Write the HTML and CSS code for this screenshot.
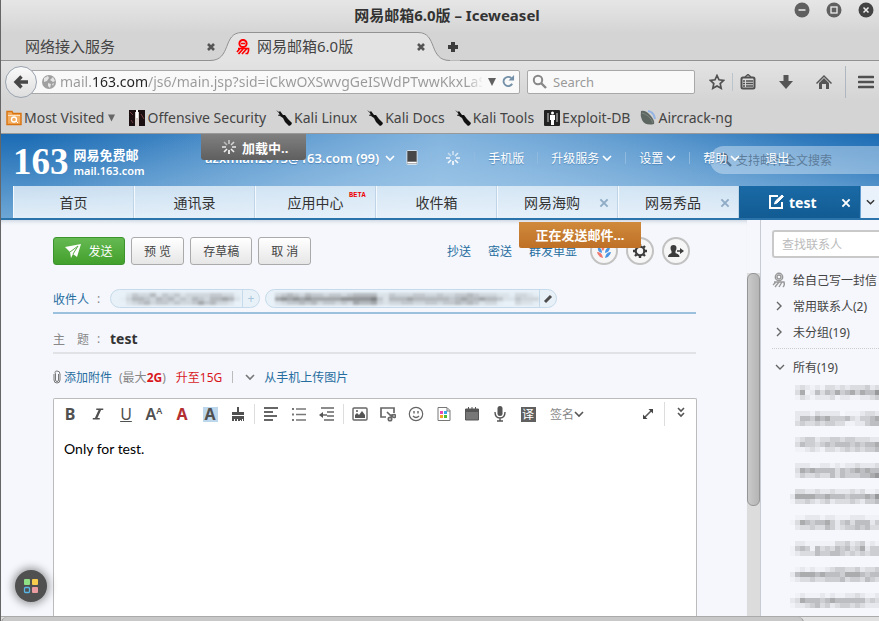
FILE: index.html
```html
<!DOCTYPE html>
<html lang="zh-CN">
<head>
<meta charset="utf-8">
<title>网易邮箱6.0版 - Iceweasel</title>
<link rel="stylesheet" href="styles.css">
</head>
<body>
<svg class="defs" aria-hidden="true">
  <symbol id="chev" viewBox="0 0 10 8"><path d="M1 2l4 4 4-4" fill="none" stroke="currentColor" stroke-width="1.6"/></symbol>
  <symbol id="close" viewBox="0 0 10 10"><path d="M2 2l6 6M8 2l-6 6" fill="none" stroke="currentColor" stroke-width="2.6"/></symbol>
  <symbol id="thinclose" viewBox="0 0 10 10"><path d="M2 2l6 6M8 2l-6 6" fill="none" stroke="currentColor" stroke-width="1.6"/></symbol>
  <symbol id="spin" viewBox="0 0 16 16"><g stroke="currentColor" stroke-width="1.6"><path d="M8 1v4" opacity=".6"/><path d="M13 3l-3 3" opacity=".7"/><path d="M15 8h-4" opacity=".8"/><path d="M13 13l-3-3" opacity=".9"/><path d="M8 15v-4"/><path d="M3 13l3-3" opacity=".9"/><path d="M1 8h4" opacity=".8"/><path d="M3 3l3 3" opacity=".5"/></g></symbol>
  <symbol id="kali" viewBox="0 0 16 16"><path d="M0 0l3 2 1-1 3 4 2 0 3 4 4 4-1 2-2 1-4-4-2-4-3-2-1-3z" fill="#111"/><path d="M3 4l-1 2 3 0z" fill="#333"/></symbol>
  <symbol id="mag" viewBox="0 0 16 16"><circle cx="6" cy="6" r="4.2" fill="none" stroke="currentColor" stroke-width="2"/><path d="M9 9l5 5" stroke="currentColor" stroke-width="2.4"/></symbol>
</svg>
<div class="window">
  <header class="titlebar">
    <h1>网易邮箱6.0版 – Iceweasel</h1>
    <div class="wm">
      <button aria-label="最小化"><svg viewBox="0 0 16 16"><circle cx="8" cy="8" r="7.5" fill="#606060"/><path d="M4.500 8h7" stroke="#eee" stroke-width="1.500"/></svg></button>
      <button aria-label="最大化"><svg viewBox="0 0 16 16"><circle cx="8" cy="8" r="7.5" fill="#606060"/><rect x="5" y="5" width="6" height="6" fill="none" stroke="#eee" stroke-width="1.300"/></svg></button>
      <button aria-label="关闭"><svg viewBox="0 0 16 16"><circle cx="8" cy="8" r="7.5" fill="#444"/><path d="M5.500 5.500l5 5M10.500 5.500l-5 5" stroke="#eee" stroke-width="1.500"/></svg></button>
    </div>
  </header>
  <nav class="tabs">
    <div class="btab"><span>网络接入服务</span><button aria-label="关闭标签"><svg viewBox="0 0 10 10"><use href="#close"/></svg></button></div>
    <div class="btab active">
      <svg class="tabshape" viewBox="0 0 244 29"><path d="M-6 28.500C16 28.500 6 .5 26 .5H202C222 .5 212 28.500 234 28.500H244V29H-6z" fill="#e3e3e3"/><path d="M-6 28.500C16 28.500 6 .5 26 .5H202C222 .5 212 28.500 234 28.500" fill="none" stroke="#929292"/></svg>
      <svg class="fav" viewBox="0 0 16 16" fill="none" stroke="#f00"><circle cx="8" cy="4.500" r="3.600" stroke-width="2"/><path d="M6 4.500h4" stroke-width="1.500"/><path d="M3 9.500h10.500q.5 3-1 5h-2M5 9.500L2 13M8 10l-4.500 5M11.500 10L7 15" stroke-width="1.700"/></svg>
      <span>网易邮箱6.0版</span><button aria-label="关闭标签"><svg viewBox="0 0 10 10"><use href="#close"/></svg></button></div>
    <button class="newtab" aria-label="新标签"><svg viewBox="0 0 10 10"><path d="M5 0v10M0 5h10" stroke="#3d3d3d" stroke-width="4"/></svg></button>
  </nav>
  <div class="nav">
    <button class="back" aria-label="后退"><svg viewBox="0 0 16 16"><path d="M8.500 2.500L3 8l5.500 5.500M4 8h11" fill="none" stroke="#474747" stroke-width="3.400"/></svg></button>
    <div class="url">
      <svg class="globe" viewBox="0 0 16 16"><circle cx="8" cy="8" r="7" fill="#a0a0a0"/><path d="M3 4l4-2 1 2-2 3-3 1zM9 6l3-3 2 4-2 1zM7 9l3 1-1 4-2-2zM11 10l2-1-1 3z" fill="#e4e4e4"/></svg>
      <input aria-label="地址" value="mail.163.com/js6/main.jsp?sid=iCkwOXSwvgGeISWdPTwwKkxLaSd">
      <svg class="drop" viewBox="0 0 8 8"><path d="M0 0h8L4 8z" fill="#606060"/></svg>
      <button aria-label="刷新"><svg viewBox="0 0 14 14"><path d="M11 9.500A5 5 0 1 1 10 3.200" fill="none" stroke="#7390a8" stroke-width="2"/><path d="M13 0v6H7z" fill="#7390a8"/></svg></button>
    </div>
    <label class="search"><svg viewBox="0 0 16 16"><use href="#mag"/></svg><input placeholder="Search" aria-label="Search"></label>
    <div class="tools">
      <button aria-label="收藏"><svg viewBox="0 0 16 16"><path d="M8 1.500l2 4.300 4.700.6-3.500 3.200 1 4.700L8 12l-4.200 2.300 1-4.700L1.300 6.400 6 5.800z" fill="none" stroke="#505050" stroke-width="1.700"/></svg></button><i></i>
      <button aria-label="书签"><svg viewBox="0 0 16 16" fill="none" stroke="#505050"><rect x="1.500" y="3.500" width="13" height="11" rx="1.500" stroke-width="2"/><path d="M5 3l3-2.500L11 3M3 7h2m1 0h7M3 9.500h2m1 0h7M3 12h2m1 0h7" stroke-width="1.400"/></svg></button>
      <button aria-label="下载"><svg viewBox="0 0 16 16"><path d="M5.500 1h5v6H15L8 15 1 7h4.500z" fill="#555"/></svg></button>
      <button aria-label="主页"><svg viewBox="0 0 16 16" fill="#555"><path d="M8 1L0 9l1 1 7-7 7 7 1-1z"/><path d="M3 9l5-5 5 5v6h-3v-5H6v5H3z"/></svg></button><b></b>
      <button aria-label="菜单"><svg viewBox="0 0 16 16"><path d="M1 3h14M1 8h14M1 13h14" stroke="#505050" stroke-width="2.600" stroke-linecap="round"/></svg></button>
    </div>
  </div>
  <nav class="bookmarks">
    <a href="#"><svg viewBox="0 0 16 16" fill="none" stroke="#d8730f"><path d="M1 14.500V1.500h5l1 2h8v11z" fill="#f3ae61" stroke-width="1.400"/><path d="M2 5.500h12" stroke="#fbe3c4"/><circle cx="8" cy="9.500" r="2.500" stroke="#fff" stroke-width="1.300"/><path d="M10 11l2 2" stroke="#fff"/></svg>Most Visited<svg class="tri" viewBox="0 0 8 8"><path d="M0 0h8L4 8z" fill="#666"/></svg></a>
    <a href="#"><svg viewBox="0 0 16 16"><path d="M0 0h16v16H0z" fill="#1d1012"/><path d="M6 2h4v14H6z" fill="#d6ccc8"/><path d="M7 0h2v8H7z" fill="#fff"/><path d="M1 2l3 3M12 4l3 5M2 10l2 3" stroke="#713c3c"/></svg>Offensive Security</a>
    <a href="#"><svg viewBox="0 0 16 16"><use href="#kali"/></svg>Kali Linux</a>
    <a href="#"><svg viewBox="0 0 16 16"><use href="#kali"/></svg>Kali Docs</a>
    <a href="#"><svg viewBox="0 0 16 16"><use href="#kali"/></svg>Kali Tools</a>
    <a href="#"><svg viewBox="0 0 16 16"><rect width="16" height="16" rx="1" fill="#222"/><path d="M3 3h2v9H3zM12 3h2v9h-2z" fill="#777"/><circle cx="8.500" cy="3" r="1.500" fill="#fff"/><path d="M6 5h5v5h-1v5H7v-5H6z" fill="#fff"/></svg>Exploit-DB</a>
    <a href="#"><svg viewBox="0 0 16 16"><path d="M1 1q5-1 10 5 4 5 3 8-9 2-12-4Q0 6 1 1z" fill="#5d6661"/><path d="M2 3q8 2 11 10" stroke="#7d8883" fill="none"/><path d="M8 1q6 1 7 8" stroke="#94b4e4" stroke-width="2" fill="none"/></svg>Aircrack-ng</a>
  </nav>
  <div class="page">
    <header class="mailhead">
      <a class="logo" href="#"><strong>163</strong><span>网易免费邮<small>mail.163.com</small></span></a>
      <nav class="account">
        <a class="me" href="#">azxmian2013@163.com (99)<svg class="chev" viewBox="0 0 10 8"><use href="#chev"/></svg></a>
        <svg class="phone" viewBox="0 0 12 16"><rect x=".5" y=".5" width="11" height="15" rx="1" fill="#474747" stroke="#dceaf6"/><path d="M1 13.500h10" stroke="#fff" stroke-width="2"/></svg><i></i>
        <svg class="busy" viewBox="0 0 16 16"><use href="#spin"/></svg><i></i>
        <a href="#">手机版</a><i></i>
        <a href="#">升级服务<svg class="chev" viewBox="0 0 10 8"><use href="#chev"/></svg></a><i></i>
        <a href="#">设置<svg class="chev" viewBox="0 0 10 8"><use href="#chev"/></svg></a><i></i>
        <a href="#">帮助<svg class="chev" viewBox="0 0 10 8"><use href="#chev"/></svg></a><i></i>
        <a href="#">退出</a>
      </nav>
      <label class="fulltext"><svg viewBox="0 0 16 16"><use href="#mag"/></svg><input placeholder="支持邮件全文搜索" aria-label="支持邮件全文搜索"></label>
      <div class="loading"><svg viewBox="0 0 16 16"><use href="#spin"/></svg>加载中..</div>
    </header>
    <nav class="mailtabs">
      <a href="#">首页</a>
      <a href="#">通讯录</a>
      <a href="#">应用中心<sup>BETA</sup></a>
      <a href="#">收件箱</a>
      <a href="#" class="closable">网易海购<svg viewBox="0 0 10 10"><use href="#thinclose"/></svg></a>
      <a href="#" class="closable">网易秀品<svg viewBox="0 0 10 10"><use href="#thinclose"/></svg></a>
      <a href="#" class="closable current"><svg class="pen" viewBox="0 0 16 16" fill="none" stroke="#fff" stroke-width="2"><path d="M10 2H2v12h12V8"/><path d="M6.500 10l1-3L14 1l1.500 1.500L9 9z" fill="#fff" stroke-width="1"/></svg>test<svg viewBox="0 0 10 10"><use href="#thinclose"/></svg></a>
      <button aria-label="更多标签"><svg viewBox="0 0 10 8"><use href="#chev"/></svg></button>
    </nav>
    <div class="workspace">
      <main class="compose">
        <div class="actions">
          <button class="send"><svg viewBox="0 0 16 14"><path d="M0 3L16 0 12 13 8 10 6 14 5 8z" fill="#fff"/><path d="M5 8l8-6-5 8" stroke="#59ab46" fill="none"/></svg>发送</button>
          <button>预 览</button><button>存草稿</button><button>取 消</button>
          <div class="links"><a href="#">抄送</a><a href="#">密送</a><a href="#">群发单显</a></div>
          <div class="round">
            <button aria-label="主题"><svg viewBox="0 0 16 16"><path d="M7 15Q2 14 1 9q5 0 6 6zM7 8Q4 5 7 1q3 3 0 7z" fill="#f0786e"/><path d="M9 15q5-1 6-6-5 0-6 6zM9 10q0-5 5-6 0 5-5 6zM6 10Q1 9 2 4q4 1 4 6z" fill="#4b96e4"/></svg></button>
            <button aria-label="设置"><svg viewBox="0 0 16 16" fill="none" stroke="#3c3c3c"><circle cx="8" cy="8" r="4.300" stroke-width="2.200"/><path d="M8 1v2M8 13v2M1 8h2M13 8h2M3 3l1.500 1.500M11.500 11.500L13 13M3 13l1.500-1.500M11.500 4.500L13 3" stroke-width="2.400"/></svg></button>
            <button aria-label="添加联系人"><svg viewBox="0 0 16 16" fill="#3c3c3c"><path d="M5.500 2q3 0 3 3 0 2-1 3v2q4 1 4 4H0q0-3 3.500-4V8q-1-1-1-3 0-3 3-3z"/><path d="M9 7.200h3V5l4 3-4 3V8.800H9z"/></svg></button>
          </div>
          <div class="sending">正在发送邮件...</div>
        </div>
        <div class="field to"><a href="#">收件人</a><span>:</span>
          <div class="chip first"><svg data-rows="02433524342333344331|13554354534354355652|02345344343346453320" data-cell="6"></svg><button aria-label="添加">+</button></div>
          <div class="chip second"><svg data-rows="34543544344345555224333443343344543332213321|67676766666777778425556555555456556554224333|23445453443436556323344334434454542331003221" data-cell="6"></svg><button aria-label="编辑"><svg viewBox="0 0 10 10"><path d="M2 8l6-6" stroke="#4d4d4d" stroke-width="3"/></svg></button></div>
        </div>
        <div class="field subject"><label for="subject">主　题</label><span>:</span><input id="subject" value="test"></div>
        <div class="attach">
          <svg class="clip" viewBox="0 0 8 14"><path d="M1 4v6q0 3 3 3t3-3V4q0-3-3-3T2.500 4v6q0 1.500 1.500 1.500T5.500 10V4" fill="none" stroke="#777"/></svg>
          <a href="#">添加附件</a><span class="max">(最大<b>2G</b>)</span><a class="up" href="#">升至15G</a><i></i>
          <svg class="chev" viewBox="0 0 10 8"><use href="#chev"/></svg><a href="#">从手机上传图片</a>
        </div>
        <section class="editor">
          <div class="format">
            <button class="t b">B</button><button class="t i" aria-label="斜体"><svg viewBox="0 0 16 16"><path d="M6 2.500h8M2 13.500h8" stroke="#505050" stroke-width="1.600"/><path d="M10.500 2.500l-5 11" stroke="#505050" stroke-width="2.600"/></svg></button><button class="t u">U</button><button class="t aa">A<small>A</small></button><button class="t red">A</button><button class="t hl"><span>A</span></button>
            <button aria-label="格式刷"><svg viewBox="0 0 16 16" fill="#505050"><path d="M7 1h2v5h5v3H2V6h5z"/><path d="M2 10h12v5h-1v-2h-1v2h-1v-1h-1v1H8v-2H7v2H5v-2H4v2H2z"/></svg></button><i></i>
            <button aria-label="对齐"><svg viewBox="0 0 16 16"><path d="M1 2h14M1 6h9M1 10h13M1 14h9" stroke="#666" stroke-width="1.800"/></svg></button>
            <button aria-label="列表"><svg viewBox="0 0 16 16"><path d="M5 3h10M5 8.500h10M5 14h10" stroke="#777" stroke-width="1.600"/><path d="M1 3h2M1 8.500h2M1 14h2" stroke="#777" stroke-width="2"/></svg></button>
            <button aria-label="缩进"><svg viewBox="0 0 16 16"><path d="M2 2h13M8 6h7M8 10h7M5 14h10M3 9h5" stroke="#666" stroke-width="1.700"/><path d="M0 9l4-3v6z" fill="#555"/></svg></button><i></i>
            <button aria-label="图片"><svg viewBox="0 0 16 16"><rect x="1" y="2" width="14" height="12" rx="1" fill="none" stroke="#666" stroke-width="1.400"/><path d="M3 12V9l2-2 2 2 3-4 3 4v3z" fill="#555"/><circle cx="5" cy="5" r="1" fill="#555"/></svg></button>
            <button aria-label="截图"><svg viewBox="0 0 16 16" fill="none" stroke="#666" stroke-width="1.700"><path d="M6 11H1V2h13v5"/><path d="M7 6l5 5M13 9h-3"/><circle cx="10" cy="13" r="1.700"/><circle cx="14" cy="10" r="1.500"/></svg></button>
            <button aria-label="表情"><svg viewBox="0 0 16 16"><circle cx="8" cy="8" r="6.700" fill="none" stroke="#666" stroke-width="1.200"/><path d="M6 5v2.500M10 5v2.500M5 10q3 3 6 0" fill="none" stroke="#666" stroke-width="1.400"/></svg></button>
            <button aria-label="信纸"><svg viewBox="0 0 16 16"><path d="M2 1.500h9l3 3v10H2zM11 2v3h3" fill="#fff" stroke="#777"/><path d="M4 5h3v3H4z" fill="#e749b0"/><path d="M8 5h3v3H8z" fill="#36a5ed"/><path d="M4 9h3v3H4z" fill="#f3a425"/><path d="M8 9h3v3H8z" fill="#51bc2f"/></svg></button>
            <button aria-label="日历"><svg viewBox="0 0 16 16"><path d="M1.500 3h13v11h-13z" fill="#777" stroke="#555"/><path d="M1 3h14v3H1zM4 1h1v3H4zM7.500 1h1v3h-1zM11 1h1v3h-1z" fill="#555"/></svg></button>
            <button aria-label="录音"><svg viewBox="0 0 16 16"><rect x="5.500" y="0" width="5" height="10" rx="2.500" fill="#555"/><path d="M3 6q0 6 5 6t5-6M8 12v3M5 15h6" fill="none" stroke="#555" stroke-width="1.400"/></svg></button>
            <button class="tr"><span>译</span></button>
            <button class="sign">签名<svg viewBox="0 0 10 8"><use href="#chev"/></svg></button>
            <button class="expand" aria-label="全屏"><svg viewBox="0 0 16 16"><path d="M4 12L12 4" stroke="#555" stroke-width="1.600"/><path d="M8.500 3H13v4.500zM3 8.500V13h4.500z" fill="#444"/></svg></button><i class="tall"></i>
            <button class="more" aria-label="更多"><svg viewBox="0 0 16 16"><path d="M5 2l3 3 3-3M5 7l3 3 3-3" fill="none" stroke="#555" stroke-width="1.600"/></svg></button>
          </div>
          <textarea aria-label="正文">Only for test.</textarea>
        </section>
      </main>
      <div class="vscroll"><div></div></div>
      <aside class="contacts">
        <input placeholder="查找联系人" aria-label="查找联系人">
        <ul>
          <li><svg viewBox="0 0 14 16" fill="none" stroke="#999" stroke-width="1.400"><circle cx="7" cy="5" r="3.700"/><circle cx="7" cy="5" r="2"/><path d="M2 10h10q1 3-1 5M4 10l-3 3M7 10l-4 5M10 10l-3 5"/></svg>给自己写一封信</li>
          <li><svg viewBox="0 0 14 16"><path d="M5 4l4 4-4 4" fill="none" stroke="#666" stroke-width="1.400"/></svg>常用联系人(2)</li>
          <li><svg viewBox="0 0 14 16"><path d="M5 4l4 4-4 4" fill="none" stroke="#666" stroke-width="1.400"/></svg>未分组(19)</li>
        </ul>
        <ul class="all">
          <li><svg viewBox="0 0 14 16"><path d="M4 6l4 4 4-4" fill="none" stroke="#666" stroke-width="1.400"/></svg>所有(19)</li>
        </ul>
        <div class="people">
          <svg data-cell="5" data-rows="023212133232333423|036125354645646557|013212223122112234"></svg>
          <svg data-cell="5" data-rows="022213222201112332|025546564445324456|034334344331122455"></svg>
          <svg data-cell="5" data-rows="023442334434433322|035443454555454556|011232133234343445"></svg>
          <svg data-cell="5" data-rows="022211221212232223|036565555354565655|024334335354445567"></svg>
          <svg data-cell="5" data-rows="033223223222323112|266665565554555657|133432342333432445"></svg>
          <svg data-cell="5" data-rows="011222122111222111|136545564245355524|023343354234454533"></svg>
          <svg data-cell="5" data-rows="022111111334234121|145415343545346244|123335445543434344"></svg>
          <svg data-cell="5" data-rows="012121123443342334|256665655546665455|123343344453443543"></svg>
          <svg data-cell="5" data-rows="012111212112232112|236555456555555343|122345342344343222"></svg>
        </div>
      </aside>
      <button class="apps" aria-label="应用"><svg viewBox="0 0 16 16"><rect x="1" y="1" width="6" height="6" rx="1" fill="#8fe085"/><rect x="9" y="1" width="6" height="6" rx="1" fill="#f8cc4d"/><rect x="1.500" y="9.500" width="5" height="5" rx="1" fill="none" stroke="#58b6e6" stroke-width="1.300"/><rect x="9" y="9" width="6" height="6" rx="1" fill="#eb9ca0"/></svg></button>
    </div>
  </div>
  <div class="hscroll"><div></div></div>
</div>
<script src="mosaic.js"></script>
</body>
</html>
```
FILE: styles.css
```css
* { box-sizing: border-box; }
body { margin: 0; font-family: "Noto Sans", "Noto Sans CJK SC", sans-serif; font-size: 13px; color: #444; }
button, input, textarea { font: inherit; color: inherit; margin: 0; padding: 0; border: 0; background: none; outline: 0; }
button { display: flex; align-items: center; justify-content: center; flex: none; white-space: nowrap; }
a { color: inherit; text-decoration: none; white-space: nowrap; }
svg { display: block; flex: none; width: 16px; height: 16px; }
.defs { display: none; }
.window { display: flex; flex-direction: column; height: 100vh; overflow: hidden; border-left: 1px solid #666; background: #d4d4d4; }

.titlebar { position: relative; height: 32px; flex: none; display: flex; justify-content: center; background: linear-gradient(#e6e6e6, #d5d5d5); }
.titlebar h1 { margin: 0; padding-left: 14px; font-size: 15px; line-height: 30px; color: #333; }
.wm { position: absolute; right: 5px; top: 2px; display: flex; gap: 16px; }
.tabs { display: flex; height: 29px; flex: none; box-shadow: inset 0 -1px #929292; }
.btab { display: flex; align-items: center; font-size: 15px; width: 215px; padding: 0 0 0 24px; line-height: 29px; position: relative; }
.btab span { flex: 1; position: relative; }
.btab button { position: relative; color: #555; }
.btab button svg { width: 10px; height: 10px; }
.btab.active { width: 210px; padding: 0 0 0 19px; }
.tabshape { position: absolute; left: 0; top: 0; width: 244px; height: 29px; overflow: visible; }
.fav { position: relative; margin-right: 6px; }
.newtab { position: relative; width: 54px; }
.newtab svg { width: 10px; height: 10px; }

.nav { display: flex; align-items: center; height: 41px; flex: none; padding-left: 4px; background: linear-gradient(#e3e3e3, #d4d4d4); }
.back { width: 32px; height: 32px; border-radius: 50%; border: 1px solid #9aa4b0; background: linear-gradient(#fafafa, #dedede); position: relative; }
.url, .search { display: flex; align-items: center; height: 24px; border: 1px solid #a8a8a8; border-radius: 2px; background: #f9f9f9; }
.url { flex: 1; margin-left: -7px; padding: 0 4px 0 10px; gap: 3px; }
.url input { flex: 1; min-width: 0; font-size: 14px; color: transparent; background: linear-gradient(90deg, #999 31px, #222 31px, #222 88px, #999 88px, #999 406px, #f9f9f9 424px); -webkit-background-clip: text; background-clip: text; }
.url .drop { width: 8px; height: 8px; margin: 0 3px; }
.url button svg { width: 13px; height: 13px; }
.search { width: 168px; margin-left: 7px; padding-left: 4px; gap: 5px; color: #888; }
.search input { width: 120px; }
.search input::placeholder { color: #999; opacity: 1; }
.tools { display: flex; align-items: center; width: 184px; padding-left: 14px; }
.tools i { width: 1px; height: 18px; margin: 0 7px; background: #bbc3cb; }
.tools b { width: 1px; height: 32px; margin: 0 12px 0 13px; background: #aeb6c0; }
.tools button + button { margin-left: 22px; }
.bookmarks { display: flex; align-items: center; height: 32px; flex: none; padding-left: 5px; gap: 10px; border-bottom: 1px solid #999; background: #d4d4d4; font-size: 14px; }
.bookmarks a { display: flex; align-items: center; gap: 2px; }
.bookmarks .tri { width: 7px; height: 8px; margin: 0 4px 0 2px; }

.page { flex: 1; min-height: 0; display: flex; flex-direction: column; background: radial-gradient(ellipse 440px 140px at 54% 100px, rgba(190,217,240,.55), transparent) 0 0 / 100% 84px no-repeat, linear-gradient(90deg, transparent 3%, rgba(150,195,232,.75) 50%, transparent) 0 0 / 100% 84px no-repeat, linear-gradient(#1b6bb4, #70a8d6 86px) #f5f7fc; }
.mailhead { position: relative; height: 52px; flex: none; display: flex; color: #fff; font-size: 12px; }
.logo { display: flex; width: 204px; padding: 12px 0 0 12px; gap: 5px; }
.logo strong { font-family: "Liberation Serif", serif; font-size: 37px; line-height: 32px; font-weight: 700; }
.logo span { font-size: 13px; font-weight: 600; line-height: 18px; }
.logo small { display: block; font-size: 11px; line-height: 14px; }
.account { position: relative; z-index: 1; display: flex; align-items: center; height: 47px; text-shadow: 0 1px 1px rgba(20,80,140,.4); }
.account a { display: flex; align-items: center; }
.account .me { font-size: 13px; font-weight: 600; }
.account i { width: 1px; height: 12px; margin: 0 13px; background: #8fb9df; }
.account i:last-of-type { margin: 0 12px; }
.chev { width: 10px; height: 8px; margin-left: 3px; }
.account .me .chev { margin-left: 6px; }
.phone { width: 12px; height: 15px; margin-left: 11px; }
.fulltext { position: absolute; right: 0; top: 12px; width: 169px; height: 28px; display: flex; align-items: center; gap: 3px; padding-left: 7px; border-radius: 14px 0 0 14px; background: rgba(220,236,249,.45); color: #4f6f8e; }
.fulltext input { width: 130px; }
.fulltext input::placeholder { color: #5d7c9a; opacity: 1; }
.loading { position: absolute; z-index: 2; left: 200px; top: 0; width: 105px; height: 26px; display: flex; align-items: center; gap: 5px; padding-left: 20px; border-radius: 0 0 3px 3px; background: linear-gradient(#808080, #5f5f5f); font-size: 13px; font-weight: 700; }
.mailtabs { display: flex; height: 34px; flex: none; padding-left: 12px; border-bottom: 2px solid #2a73ab; font-size: 14px; color: #333; }
.mailtabs a { position: relative; flex: 0 0 121px; display: flex; align-items: center; justify-content: center; border-left: 1px solid #f4f9fd; border-right: 1px solid #bfd4e6; background: linear-gradient(rgba(226,238,248,.82), rgba(236,244,251,.92)); }
.mailtabs sup { position: absolute; left: 93px; top: 5px; font-size: 7px; line-height: 9px; font-family: "Liberation Mono", monospace; font-weight: 700; color: #e00; }
.mailtabs .closable { justify-content: flex-start; padding-left: 26px; }
.mailtabs .closable > svg:last-child { position: absolute; right: 7px; top: 11px; width: 12px; height: 12px; color: #8fabc6; }
.mailtabs a.current { gap: 5px; padding-left: 28px; border-color: #176199; background: linear-gradient(#1a6aa6, #125b93); color: #fff; font-weight: 700; }
.mailtabs .current > svg:last-child { color: #fff; }
.mailtabs button { flex: 1; margin-left: 1px; background: #e9f2fa; }
.mailtabs button svg { width: 9px; height: 8px; }

.workspace { position: relative; flex: 1; min-height: 0; display: flex; background: #f5f7fc; }
.compose { flex: 1; min-width: 0; display: flex; flex-direction: column; padding: 17px 50px 0 52px; box-shadow: inset 0 4px 4px -3px #c4ccd8; font-size: 12px; }
.actions { position: relative; display: flex; align-items: center; gap: 6px; height: 28px; flex: none; }
.actions > button { height: 28px; padding: 0 12px; border: 1px solid #aaa; border-radius: 3px; background: linear-gradient(#fff, #e6e6e6); }
.actions > .send { width: 72px; padding: 0; gap: 7px; color: #fff; border-color: #3c942e; background: linear-gradient(#65b952, #43a02c); }
.links { display: flex; gap: 17px; margin-left: auto; color: #256d9f; }
.round { display: flex; gap: 8px; margin: 0 7px 0 7px; }
.round button { width: 28px; height: 28px; border: 2px solid #c2c2c2; border-radius: 50%; background: #f6f6f6; }
.sending { position: absolute; right: 56px; top: -15px; width: 122px; height: 26px; line-height: 26px; text-align: center; color: #fff; font-size: 13px; font-weight: 700; border-radius: 0 0 2px 2px; background: linear-gradient(#d08a3c, #be7026); }
.field { display: flex; align-items: center; flex: none; color: #888; margin-right: 1px; }
.field > span { width: 13px; margin-left: 8px; }
.to { height: 33px; margin-top: 16px; border-bottom: 2px solid #9cc1de; padding-top: 4px; }
.to a { color: #256d9f; }
.chip { display: flex; align-items: center; justify-content: space-between; height: 19px; margin-right: 5px; padding-left: 9px; border: 1px solid #c5daea; border-radius: 10px; background: #e8f1f8; overflow: hidden; }
.chip.first { width: 150px; }
.chip.second { width: 292px; }
.chip > svg { height: 12px; filter: blur(1px); }
.chip button { width: 17px; height: 17px; border-left: 1px solid #c5daea; color: #a9c6dc; }
.chip button svg { width: 10px; height: 10px; }
.subject { height: 40px; border-bottom: 2px solid #e0e2e5; padding-top: 11px; }
.subject input { flex: 1; min-width: 0; font-size: 14px; line-height: 20px; font-weight: 700; color: #333; }
.attach { display: flex; align-items: center; height: 44px; padding-top: 2px; flex: none; color: #256d9f; }
.attach .clip { width: 8px; height: 14px; margin-right: 3px; }
.attach .max { margin: 0 10px 0 7px; color: #888; }
.attach b, .attach .up { color: #d9171b; }
.attach i { width: 1px; height: 12px; margin: 0 12px 0 10px; background: #bbb; }
.attach .chev { margin: 0 9px 0 0; color: #777; }
.editor { flex: 1; min-height: 0; display: flex; flex-direction: column; border: 1px solid #bbb; border-bottom: 0; border-radius: 2px 2px 0 0; background: #fff; }
.format { display: flex; align-items: center; height: 30px; flex: none; padding-left: 2px; }
.format button { width: 28px; height: 28px; }
.format i { width: 1px; height: 20px; margin: 0 2px; background: #ddd; }
.format .t { font-size: 16px; font-weight: 700; color: #505050; }
.format .i svg { width: 14px; height: 14px; }
.format .u { font-weight: 400; text-decoration: underline; }
.format .aa { align-items: flex-start; font-weight: 600; line-height: 28px; }
.format .aa small { font-size: 9px; line-height: 22px; }
.format .t.red { color: #b32f31; }
.format .hl span { width: 15px; line-height: 15px; background: #bcd7ec; }
.format .tr span { width: 15px; line-height: 15px; font-size: 12px; background: #606060; color: #fff; }
.format button.sign { width: 50px; color: #888; }
.format .sign svg { width: 10px; height: 8px; color: #555; }
.format .expand { margin-left: auto; }
.format .tall { height: 24px; }
.format .more { margin-right: 1px; }
.editor textarea { flex: 1; resize: none; overflow: hidden; padding: 10px; font-family: Lato, "Noto Sans CJK SC", sans-serif; font-size: 14px; line-height: 20px; color: #000; }
.vscroll { width: 13px; flex: none; margin-top: 53px; background: #dcdcdc; }
.vscroll div { height: 68%; border: 1px solid #959595; border-radius: 6px; background: linear-gradient(90deg, #c9c9c9, #b5b5b5); }
.contacts { width: 119px; flex: none; padding: 10px 0 0 11px; border-left: 1px solid #c8ccd2; font-size: 12px; overflow: hidden; }
.contacts input { display: block; width: 120px; height: 28px; padding-left: 8px; border: 2px solid #c9c9c9; border-radius: 3px; background: #fff; }
.contacts input::placeholder { color: #bbb; opacity: 1; }
.contacts ul { list-style: none; margin: 0; padding: 9px 0 3px; border-bottom: 1px dotted #ccc; }
.contacts li { display: flex; align-items: center; gap: 7px; height: 26px; white-space: nowrap; }
.contacts li svg { width: 14px; height: 16px; }
.contacts .all { padding: 5px 0 3px; border: 0; }
.people { display: flex; flex-direction: column; gap: 11px; margin: 2px 0 0 18px; }
.apps { position: absolute; left: 14px; bottom: 14px; width: 32px; height: 32px; border-radius: 50%; background: #505050; box-shadow: 0 0 8px 2px rgba(0,0,0,.4); }
.hscroll { height: 5px; flex: none; overflow: hidden; background: #e0e0e0; border-top: 1px solid #aaa; }
.hscroll div { width: 803px; max-width: 92%; height: 12px; border: 1px solid #909090; border-top: 0; border-radius: 6px; background: #c8c8c8; }
```
FILE: mosaic.js
```js
// Draws the pixelated addresses: each digit is the darkness of one cell.
document.querySelectorAll('svg[data-rows]').forEach(function (svg) {
  var rows = svg.dataset.rows.split('|');
  var w = Number(svg.dataset.cell);
  var h = w === 6 ? 4 : 5;
  svg.setAttribute('viewBox', '0 0 ' + rows[0].length * w + ' ' + rows.length * h);
  svg.style.width = rows[0].length * w + 'px';
  svg.style.height = rows.length * h + 'px';
  rows.forEach(function (row, y) {
    row.split('').forEach(function (level, x) {
      var cell = document.createElementNS('http://www.w3.org/2000/svg', 'rect');
      cell.setAttribute('x', x * w);
      cell.setAttribute('y', y * h);
      cell.setAttribute('width', w);
      cell.setAttribute('height', h);
      cell.setAttribute('fill', '#555');
      cell.setAttribute('fill-opacity', Math.pow(level / 10, 1.5));
      svg.appendChild(cell);
    });
  });
});
```
